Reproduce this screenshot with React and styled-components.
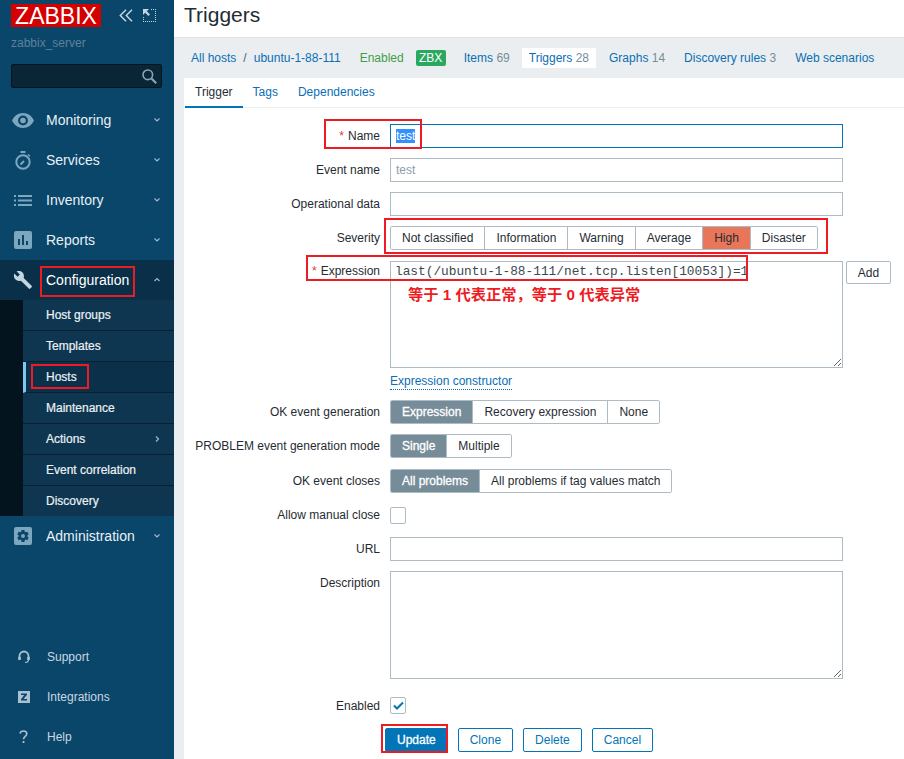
import React from "react"
import styled, { createGlobalStyle } from "styled-components"

const GlobalStyle = createGlobalStyle`
  html, body {
    margin: 0;
    height: 100%;
    overflow: hidden;
    background: #ebeef0;
  }
  body {
    font-family: "Liberation Sans", Arial, sans-serif;
    font-size: 12px;
    color: #1f2c33;
  }
`;

const Page = styled.div`
  position: relative;
  display: flex;
  width: 904px;
  height: 759px;
  overflow: hidden;
`;

/* sidebar */
const Sidebar = styled.aside`
  flex: none;
  width: 174px;
  height: 100%;
  display: flex;
  flex-direction: column;
  background: #0a466a;
`;

const Brand = styled.div`
  display: flex;
  align-items: center;
  padding: 4px 0 0 11px;
  height: 23px;
`;

const Logo = styled.div`
  width: 90px;
  height: 23px;
  background: #d40000;
  color: #fff;
  font-size: 23px;
  line-height: 24px;
  text-align: center;
  white-space: nowrap;
`;

const BrandTools = styled.div`
  display: flex;
  align-items: center;
  gap: 10px;
  margin-left: 18px;
  color: #c5d5de;
`;

const ServerName = styled.div`
  margin: 9px 0 0 11px;
  height: 14px;
  line-height: 14px;
  color: #5f8199;
`;

const SearchBox = styled.div`
  display: flex;
  align-items: center;
  justify-content: flex-end;
  box-sizing: border-box;
  width: 151px;
  height: 24px;
  margin: 14px 0 0 11px;
  padding-right: 4px;
  background: #092536;
  border: 1px solid #05151f;
  border-radius: 2px;
  color: #87a5b8;
`;

const Nav = styled.nav`
  margin-top: 12px;
`;

const NavItem = styled.div`
  display: flex;
  align-items: center;
  height: 40px;
  color: ${p => (p.$open ? "#fff" : "#e8f0f5")};
  background: ${p => (p.$open ? "#0a3049" : "transparent")};
  font-size: 14px;
`;

const NavIcon = styled.span`
  flex: none;
  display: flex;
  align-items: center;
  justify-content: center;
  width: 46px;
  color: ${p => (p.$open ? "#c3d5df" : "#7da6bf")};
`;

const NavLabel = styled.span`
  flex: 1;
`;

const Caret = styled.span`
  flex: none;
  display: flex;
  width: 8px;
  margin-right: 13px;
  color: #9db8c9;
`;

const SubWrap = styled.div`
  padding-left: 23px;
  background: #04141e;
`;

const SubItem = styled.div`
  display: flex;
  align-items: center;
  box-sizing: border-box;
  height: ${p => (p.$last ? 30 : 31)}px;
  padding-left: ${p => (p.$current ? "20px" : "23px")};
  background: ${p => (p.$current ? "#0b3049" : "#0e3650")};
  border-bottom: ${p => (p.$last ? "0" : "1px solid #08202f")};
  border-left: ${p => (p.$current ? "3px solid #7cc6f2" : "0")};
  color: #eaf1f5;
  -webkit-text-stroke: 0.2px #eaf1f5;
`;

const SubLabel = styled.span`
  flex: 1;
`;

const FooterNav = styled.div`
  margin-top: auto;
  padding-bottom: 2px;
`;

const FooterItem = styled.div`
  display: flex;
  align-items: center;
  height: 40px;
  color: #c8d8e2;
`;

const FooterIcon = styled.span`
  flex: none;
  display: flex;
  justify-content: center;
  width: 47px;
  color: #a9c1d0;
`;

/* main column */
const Main = styled.main`
  flex: 1;
  min-width: 0;
  display: flex;
  flex-direction: column;
`;

const Header = styled.header`
  box-sizing: border-box;
  height: 38px;
  padding-left: 10px;
  background: #fff;
  border-bottom: 1px solid #dfe4e7;
  font-size: 21px;
  line-height: 30px;
  color: #1f2c33;
`;

const HostNav = styled.div`
  display: flex;
  align-items: center;
  height: 40px;
  padding-left: 17px;
`;

const NavLink = styled.span`
  color: #0a6eb4;
`;

const Muted = styled.span`
  color: #768d99;
`;

const Slash = styled.span`
  margin: 0 7px;
  color: #4e6470;
`;

const Status = styled.span`
  margin-left: 19px;
  color: #429e47;
`;

const AvailTag = styled.span`
  margin: 0 18px 0 12px;
  width: 30px;
  height: 16px;
  line-height: 16px;
  text-align: center;
  background: #2aa860;
  border-radius: 2px;
  color: #fff;
`;

const HostTab = styled.span`
  margin-right: ${p => (p.$current ? "13px" : "19px")};
  margin-left: ${p => (p.$current ? "-7px" : "0")};
  padding: ${p => (p.$current ? "0 7px" : "0")};
  height: 20px;
  line-height: 20px;
  background: ${p => (p.$current ? "#fff" : "transparent")};
`;

const Panel = styled.section`
  flex: 1;
  margin-left: 10px;
  background: #fff;
`;

const Tabs = styled.div`
  display: flex;
  height: 30px;
  box-sizing: border-box;
  padding-left: 1px;
  border-bottom: 1px solid #ebeef0;
`;

const Tab = styled.div`
  box-sizing: border-box;
  height: 30px;
  padding: 0 10px;
  line-height: 29px;
  color: ${p => (p.$active ? "#1f2c33" : "#0a6eb4")};
  border-bottom: ${p => (p.$active ? "2px solid #0275b8" : "0")};
`;

const Form = styled.form`
  display: flex;
  flex-direction: column;
  gap: 10px;
  padding-top: 16px;
`;

const Row = styled.div`
  display: flex;
  align-items: ${p => (p.$top ? "flex-start" : "center")};
  min-height: ${p => (p.$short ? "17px" : "24px")};
  margin-top: ${p => p.$mt || 0}px;
`;

const Label = styled.label`
  flex: none;
  width: 196px;
  margin-right: 10px;
  text-align: right;
  color: #1f2c33;
  line-height: ${p => (p.$line ? `${p.$line}px` : "normal")};
`;

const Star = styled.span`
  margin-right: 4px;
  color: #e33734;
`;

const TextBox = styled.div`
  box-sizing: border-box;
  width: 453px;
  height: 24px;
  padding: 0 5px;
  line-height: 22px;
  border: 1px solid ${p => (p.$focus ? "#0275b8" : "#acbbc4")};
  color: ${p => (p.$muted ? "#8d9ea8" : "#1f2c33")};
  background: #fff;
`;

const Selected = styled.span`
  background: #3390ff;
  color: #fff;
  display: inline-block;
  line-height: 14px;
`;

const Area = styled.textarea`
  display: block;
  box-sizing: border-box;
  width: 453px;
  height: ${p => p.$height}px;
  margin: 0;
  padding: 2px 4px;
  border: 1px solid #acbbc4;
  border-radius: 0;
  outline: 0;
  background: #fff;
  color: #3a4952;
  font-family: "Liberation Mono", "Courier New", monospace;
  font-size: 12.8px;
  line-height: 15px;
`;

const FieldStack = styled.div`
  display: flex;
  flex-direction: column;
`;

const ExprLink = styled.span`
  align-self: flex-start;
  box-sizing: border-box;
  margin-top: 6px;
  height: 16px;
  line-height: 14px;
  color: #0a6eb4;
  border-bottom: 1px dotted #0a6eb4;
`;

const Segmented = styled.div`
  display: inline-flex;
  height: 24px;
  box-sizing: border-box;
  border: 1px solid #acbbc4;
  border-radius: 2px;
  overflow: hidden;
`;

const Segment = styled.span`
  padding: 0 11px;
  line-height: 22px;
  background: ${p => p.$bg || "#fff"};
  color: ${p => (p.$light ? "#fff" : "#1f2c33")};
  -webkit-text-stroke: ${p => (p.$light ? "0.3px #fff" : "0")};
  border-right: ${p => (p.$last ? "0" : "1px solid #acbbc4")};
`;

const AddButton = styled.button`
  box-sizing: border-box;
  width: 45px;
  height: 23px;
  margin-left: 3px;
  padding: 0;
  background: #fff;
  border: 1px solid #acbbc4;
  border-radius: 2px;
  color: #1f2c33;
  font: inherit;
`;

const Check = styled.span`
  display: flex;
  align-items: center;
  justify-content: center;
  box-sizing: border-box;
  width: 16px;
  height: 17px;
  background: #fff;
  border: 1px solid #acbbc4;
  border-radius: 2px;
  color: #0275b8;
`;

const Actions = styled.div`
  display: flex;
  gap: 10px;
  margin-top: 4px;
  padding-left: 201px;
`;

const Button = styled.button`
  box-sizing: border-box;
  height: 24px;
  padding: 0 11px;
  background: ${p => (p.$primary ? "#0275b8" : "#fff")};
  border: 1px solid #0275b8;
  border-radius: 2px;
  color: ${p => (p.$primary ? "#fff" : "#0275b8")};
  font: inherit;
  -webkit-text-stroke: ${p => (p.$primary ? "0.3px #fff" : "0")};
`;

/* red marks drawn over the screenshot */
const Mark = styled.div`
  position: absolute;
  left: ${p => p.$x}px;
  top: ${p => p.$y}px;
  width: ${p => p.$w}px;
  height: ${p => p.$h}px;
  box-sizing: border-box;
  border: 2px solid #ed1c24;
  pointer-events: none;
`;

const Note = styled.div`
  position: absolute;
  left: 408px;
  top: 286px;
  color: #ed1c24;
  font-family: "Liberation Sans", "Noto Sans CJK SC", sans-serif;
  font-size: 15.25px;
  line-height: 18px;
  font-weight: 700;
  white-space: nowrap;
`;

const Eye = () => (
  <svg width="22" height="15" viewBox="0 0 22 15" fill="currentColor">
    <path fillRule="evenodd" d="M11 0C6 0 2 3 0 7.500 2 12 6 15 11 15s9-3 11-7.500C20 3 16 0 11 0zm0 12.500a5 5 0 1 1 0-10 5 5 0 0 1 0 10zm0-2.200a2.800 2.800 0 1 0 0-5.600 2.800 2.800 0 0 0 0 5.600z" />
  </svg>
);

const Stopwatch = () => (
  <svg width="18" height="19" viewBox="0 0 18 19" fill="none" stroke="currentColor">
    <circle cx="9" cy="11" r="6.700" strokeWidth="2" />
    <path d="M6.500 1h5" strokeWidth="2" />
    <path d="M14 3.500l1.800 1.800" strokeWidth="1.600" />
    <path d="M6.500 13.500L10 10" strokeWidth="2" />
  </svg>
);

const ListIcon = () => (
  <svg width="18" height="11" viewBox="0 0 18 11" fill="currentColor">
    <path d="M0 0h2v2H0zM4 0h14v2H4zM0 4.500h2v2H0zM4 4.500h14v2H4zM0 9h2v2H0zM4 9h14v2H4z" />
  </svg>
);

const Bars = () => (
  <svg width="18" height="18" viewBox="0 0 18 18" fill="currentColor">
    <path fillRule="evenodd" d="M2 0h14a2 2 0 0 1 2 2v14a2 2 0 0 1-2 2H2a2 2 0 0 1-2-2V2a2 2 0 0 1 2-2zm2 8v6h2V8zm4-4v10h2V4zm4 6v4h2v-4z" />
  </svg>
);

const Wrench = () => (
  <svg width="18" height="18" viewBox="0 0 18 18" fill="currentColor">
    <path d="M17.600 14.800L9.700 6.900c.6-2 .1-4.100-1.400-5.600C6.800-.2 4.500-.5 2.600.3l3.200 3.200-2.300 2.300L.3 2.600c-.8 1.900-.5 4.200 1 5.700 1.500 1.500 3.600 2 5.600 1.400l7.900 7.900c.4.400 1 .4 1.400 0l1.400-1.400c.4-.4.4-1 0-1.400z" />
  </svg>
);

const Gear = () => (
  <svg width="18" height="18" viewBox="0 0 18 18" fill="currentColor">
    <path fillRule="evenodd" d="M2 0h14a2 2 0 0 1 2 2v14a2 2 0 0 1-2 2H2a2 2 0 0 1-2-2V2a2 2 0 0 1 2-2zm5.600 3l-.3 1.700-1 .6-1.600-.6-1.400 2.500 1.300 1.100v1.300l-1.300 1.100 1.400 2.500 1.600-.6 1 .6.300 1.700h2.800l.3-1.700 1-.6 1.600.6 1.400-2.500-1.300-1.100V8.300l1.300-1.100-1.400-2.500-1.600.6-1-.6L10.400 3zM9 7a2 2 0 1 1 0 4 2 2 0 0 1 0-4z" />
  </svg>
);

const Headset = () => (
  <svg width="12" height="14" viewBox="0 0 12 14" fill="none" stroke="currentColor" strokeWidth="1.800">
    <path d="M1.500 9V6a4.500 4.500 0 0 1 9 0v3" />
    <path d="M10.500 9.500c0 1.800-1.500 3-3.500 3" strokeWidth="1.200" />
    <path d="M1.500 7v3M10.500 7v3" strokeWidth="2.600" />
  </svg>
);

const ZIcon = () => (
  <svg width="12" height="12" viewBox="0 0 12 12" fill="currentColor">
    <path fillRule="evenodd" d="M0 0h12v12H0zm3 2.500V4h3.300L3 8.200v1.300h6V8H5.600L9 3.800V2.500z" />
  </svg>
);

const Question = () => (
  <svg width="9" height="14" viewBox="0 0 9 14" fill="none" stroke="currentColor" strokeWidth="1.600">
    <path d="M1 3.500C1.300 2 2.600 1 4.400 1 6.400 1 7.800 2.100 7.800 3.800c0 2.500-3.300 2.500-3.300 5.400" />
    <path d="M4.500 11v2" strokeWidth="1.800" />
  </svg>
);

const SearchGlass = () => (
  <svg width="15" height="15" viewBox="0 0 15 15" fill="none" stroke="currentColor" strokeWidth="1.600">
    <circle cx="5.800" cy="5.800" r="4.800" />
    <path d="M9.500 9.500l4.700 4.700" strokeWidth="2.200" />
  </svg>
);

const Collapse = () => (
  <svg width="14" height="13" viewBox="0 0 14 13" fill="none" stroke="currentColor" strokeWidth="1.500">
    <path d="M7 .8L1.300 6.500 7 12.200M13 .8L7.300 6.500 13 12.200" />
  </svg>
);

const Kiosk = () => (
  <svg width="13" height="13" viewBox="0 0 13 13" fill="currentColor">
    <path d="M0 0h6L3.800 2.200 7 5.400 5.400 7 2.200 3.800 0 6z" />
    <path d="M8 0h1v1H8zM10 0h1v1h-1zM12 0h1v1h-1zM12 2h1v1h-1zM12 4h1v1h-1zM12 6h1v1h-1zM12 8h1v1h-1zM12 10h1v1h-1zM12 12h1v1h-1zM10 12h1v1h-1zM8 12h1v1H8zM6 12h1v1H6zM4 12h1v1H4zM2 12h1v1H2zM0 12h1v1H0zM0 10h1v1H0zM0 8h1v1H0z" />
  </svg>
);

const Chevron = ({ dir = "down" }) => {
  const paths = { down: "M1.500 2.500L4 5l2.500-2.500", up: "M1.500 5L4 2.500 6.500 5", right: "M3 1.500L5.500 4 3 6.500" };
  return (
    <svg width="8" height="8" viewBox="0 0 8 8" fill="none" stroke="currentColor" strokeWidth="1.200">
      <path d={paths[dir]} />
    </svg>
  );
};

const Tick = () => (
  <svg width="11" height="9" viewBox="0 0 11 9" fill="none" stroke="currentColor" strokeWidth="2">
    <path d="M1 4.500l3 3L10 1.500" />
  </svg>
);

const mainNav = [
  { label: "Monitoring", icon: <Eye /> },
  { label: "Services", icon: <Stopwatch /> },
  { label: "Inventory", icon: <ListIcon /> },
  { label: "Reports", icon: <Bars /> },
];

const subNav = ["Host groups", "Templates", "Hosts", "Maintenance", "Actions", "Event correlation", "Discovery"];

const marks = [
  { x: 40, y: 266, w: 95, h: 31 },
  { x: 31, y: 364, w: 58, h: 25 },
  { x: 324, y: 119, w: 98, h: 30 },
  { x: 384, y: 218, w: 444, h: 36 },
  { x: 306, y: 255, w: 442, h: 26 },
  { x: 381, y: 724, w: 67, h: 29 },
];

const Choice = ({ items, active, bg = "#768d99", light = true }) => (
  <Segmented>
    {items.map((item, i) => (
      <Segment
        key={item}
        $bg={item === active ? bg : undefined}
        $light={item === active && light}
        $last={i === items.length - 1}
      >
        {item}
      </Segment>
    ))}
  </Segmented>
);

const App = () => (
  <Page>
    <GlobalStyle />
    <Sidebar>
      <Brand>
        <Logo>ZABBIX</Logo>
        <BrandTools>
          <Collapse />
          <Kiosk />
        </BrandTools>
      </Brand>
      <ServerName>zabbix_server</ServerName>
      <SearchBox>
        <SearchGlass />
      </SearchBox>
      <Nav>
        {mainNav.map(item => (
          <NavItem key={item.label}>
            <NavIcon>{item.icon}</NavIcon>
            <NavLabel>{item.label}</NavLabel>
            <Caret><Chevron /></Caret>
          </NavItem>
        ))}
        <NavItem $open>
          <NavIcon $open><Wrench /></NavIcon>
          <NavLabel>Configuration</NavLabel>
          <Caret><Chevron dir="up" /></Caret>
        </NavItem>
        <SubWrap>
          {subNav.map((name, i) => (
            <SubItem key={name} $current={name === "Hosts"} $last={i === subNav.length - 1}>
              <SubLabel>{name}</SubLabel>
              {name === "Actions" && <Caret><Chevron dir="right" /></Caret>}
            </SubItem>
          ))}
        </SubWrap>
        <NavItem>
          <NavIcon><Gear /></NavIcon>
          <NavLabel>Administration</NavLabel>
          <Caret><Chevron /></Caret>
        </NavItem>
      </Nav>
      <FooterNav>
        <FooterItem><FooterIcon><Headset /></FooterIcon>Support</FooterItem>
        <FooterItem><FooterIcon><ZIcon /></FooterIcon>Integrations</FooterItem>
        <FooterItem><FooterIcon><Question /></FooterIcon>Help</FooterItem>
      </FooterNav>
    </Sidebar>

    <Main>
      <Header>Triggers</Header>
      <HostNav>
        <NavLink>All hosts</NavLink>
        <Slash>/</Slash>
        <NavLink>ubuntu-1-88-111</NavLink>
        <Status>Enabled</Status>
        <AvailTag>ZBX</AvailTag>
        <HostTab><NavLink>Items</NavLink> <Muted>69</Muted></HostTab>
        <HostTab $current><NavLink>Triggers</NavLink> <Muted>28</Muted></HostTab>
        <HostTab><NavLink>Graphs</NavLink> <Muted>14</Muted></HostTab>
        <HostTab><NavLink>Discovery rules</NavLink> <Muted>3</Muted></HostTab>
        <HostTab><NavLink>Web scenarios</NavLink></HostTab>
      </HostNav>
      <Panel>
        <Tabs>
          <Tab $active>Trigger</Tab>
          <Tab>Tags</Tab>
          <Tab>Dependencies</Tab>
        </Tabs>
        <Form>
          <Row>
            <Label><Star>*</Star>Name</Label>
            <TextBox $focus><Selected>test</Selected></TextBox>
          </Row>
          <Row>
            <Label>Event name</Label>
            <TextBox $muted>test</TextBox>
          </Row>
          <Row>
            <Label>Operational data</Label>
            <TextBox />
          </Row>
          <Row>
            <Label>Severity</Label>
            <Choice
              items={["Not classified", "Information", "Warning", "Average", "High", "Disaster"]}
              active="High"
              bg="#e97659"
              light={false}
            />
          </Row>
          <Row $top $mt={1}>
            <Label $line={21}><Star>*</Star>Expression</Label>
            <FieldStack>
              <Area $height={107} readOnly value="last(/ubuntu-1-88-111/net.tcp.listen[10053])=1" />
              <ExprLink>Expression constructor</ExprLink>
            </FieldStack>
            <AddButton type="button">Add</AddButton>
          </Row>
          <Row>
            <Label>OK event generation</Label>
            <Choice items={["Expression", "Recovery expression", "None"]} active="Expression" />
          </Row>
          <Row>
            <Label>PROBLEM event generation mode</Label>
            <Choice items={["Single", "Multiple"]} active="Single" />
          </Row>
          <Row $mt={1}>
            <Label>OK event closes</Label>
            <Choice items={["All problems", "All problems if tag values match"]} active="All problems" />
          </Row>
          <Row>
            <Label>Allow manual close</Label>
            <Check />
          </Row>
          <Row>
            <Label>URL</Label>
            <TextBox />
          </Row>
          <Row $top>
            <Label $line={24}>Description</Label>
            <Area $height={108} readOnly value="" />
          </Row>
          <Row $short $mt={8}>
            <Label>Enabled</Label>
            <Check><Tick /></Check>
          </Row>
          <Actions>
            <Button type="button" $primary>Update</Button>
            <Button type="button">Clone</Button>
            <Button type="button">Delete</Button>
            <Button type="button">Cancel</Button>
          </Actions>
        </Form>
      </Panel>
    </Main>

    {marks.map(m => (
      <Mark key={`${m.x}-${m.y}`} $x={m.x} $y={m.y} $w={m.w} $h={m.h} />
    ))}
    <Note>等于 1 代表正常，等于 0 代表异常</Note>
  </Page>
);

export default App;
